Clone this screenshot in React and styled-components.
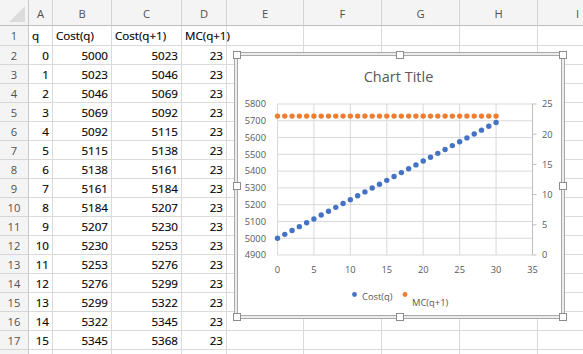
import React from 'react';
import styled, { createGlobalStyle } from 'styled-components';

const GlobalStyle = createGlobalStyle`
  html, body {
    margin: 0;
    padding: 0;
    background: #fff;
    overflow: hidden;
  }
  body {
    font-family: "Open Sans", "Liberation Sans", sans-serif;
  }
`;

const COLS = ['A', 'B', 'C', 'D', 'E', 'F', 'G', 'H', 'I'];
const WIDTHS = [29, 24, 59, 70, 45, 77, 78, 78, 78, 80];

const rows = Array.from({ length: 16 }, (_, q) => ({
  q,
  cost: 5000 + 23 * q,
  next: 5023 + 23 * q,
  mc: 23,
}));

const Page = styled.div`
  position: relative;
  width: 583px;
  height: 354px;
  overflow: hidden;
`;

const Sheet = styled.div`
  display: grid;
  grid-template-columns: ${WIDTHS.map((w) => `${w}px`).join(' ')};
  grid-template-rows: 26px 20px repeat(17, 19px);
  font-size: 11.6px;
  color: #000;
  -webkit-text-stroke: 0.15px #000;
`;

const Corner = styled.div`
  position: relative;
  background: #f4f4f4;
  border-right: 1px solid #c9c9c9;
  border-bottom: 1px solid #bdbdbd;
  box-sizing: border-box;
  &::after {
    content: '';
    position: absolute;
    right: 3px;
    bottom: 3px;
    width: 0;
    height: 0;
    border-left: 16px solid transparent;
    border-bottom: 16px solid #dcdcdc;
  }
`;

const ColHead = styled.div`
  background: #f4f4f4;
  border-right: 1px solid #d4d4d4;
  border-bottom: 1px solid #bdbdbd;
  box-sizing: border-box;
  display: flex;
  align-items: center;
  justify-content: center;
  color: #505050;
  -webkit-text-stroke: 0;
  font-size: 11.2px;
  padding-top: 1px;
`;

const RowHead = styled.div`
  background: #f4f4f4;
  border-right: 1px solid #c9c9c9;
  border-bottom: 1px solid #d6d6d6;
  box-sizing: border-box;
  display: flex;
  align-items: center;
  justify-content: center;
  color: #505050;
  -webkit-text-stroke: 0;
  font-size: 11.2px;
`;

const Cell = styled.div`
  border-right: 1px solid #dadada;
  border-bottom: 1px solid #dadada;
  box-sizing: border-box;
  display: flex;
  align-items: center;
  justify-content: ${(p) => (p.$align === 'right' ? 'flex-end' : 'flex-start')};
  padding: 0 3px;
  white-space: nowrap;
  overflow: visible;
  min-width: 0;
`;

const Frame = styled.div`
  position: absolute;
  left: 234px;
  top: 52px;
  width: 331px;
  height: 267px;
  box-sizing: border-box;
  border: 1px solid #a9a9a9;
  padding: 2px;
  background: #ececec;
`;

const ChartBox = styled.div`
  width: 100%;
  height: 100%;
  box-sizing: border-box;
  border: 1px solid #a9a9a9;
  background: #fff;
  display: flex;
`;

const Handle = styled.div`
  position: absolute;
  width: 8px;
  height: 8px;
  box-sizing: border-box;
  background: #fff;
  border: 1px solid #8d8d8d;
  left: ${(p) => p.$x};
  top: ${(p) => p.$y};
  transform: translate(-50%, -50%);
`;

const HANDLES = [
  ['1.5px', '1.5px'],
  ['50%', '1.5px'],
  ['calc(100% - 1.5px)', '1.5px'],
  ['1.5px', '50%'],
  ['calc(100% - 1.5px)', '50%'],
  ['1.5px', 'calc(100% - 1.5px)'],
  ['50%', 'calc(100% - 1.5px)'],
  ['calc(100% - 1.5px)', 'calc(100% - 1.5px)'],
];

// plot geometry in page coordinates
const PX0 = 277.5;
const PX1 = 532.5;
const PY0 = 104;
const PY1 = 255;
const xAt = (v) => PX0 + (v / 35) * (PX1 - PX0);
const yLeft = (v) => PY1 - ((v - 4900) / 900) * (PY1 - PY0);
const yRight = (v) => PY1 - (v / 25) * (PY1 - PY0);

const BLUE = '#4472c4';
const ORANGE = '#ed7d31';
const AXIS_TEXT = '#595959';

const Chart = () => {
  const points = Array.from({ length: 31 }, (_, q) => q);
  const leftTicks = Array.from({ length: 10 }, (_, i) => 4900 + i * 100);
  const xTicks = Array.from({ length: 8 }, (_, i) => i * 5);
  const rightTicks = Array.from({ length: 6 }, (_, i) => i * 5);

  return (
    <svg width="323" height="259" viewBox="238 56 323 259" fontFamily='"Open Sans", "Liberation Sans", sans-serif'>
      <text x="398.5" y="82" textAnchor="middle" fontSize="14.5" fill={AXIS_TEXT}>
        Chart Title
      </text>

      {leftTicks.map((v) => (
        <line key={`h${v}`} x1={PX0} x2={PX1} y1={yLeft(v)} y2={yLeft(v)} stroke="#d9d9d9" strokeWidth="1" />
      ))}
      {xTicks.map((v) => (
        <line key={`v${v}`} x1={xAt(v)} x2={xAt(v)} y1={PY0} y2={PY1} stroke="#d9d9d9" strokeWidth="1" />
      ))}
      <line x1={PX1} x2={PX1} y1={PY0} y2={PY1} stroke="#bfbfbf" strokeWidth="1" />
      {rightTicks.map((v) => (
        <line key={`t${v}`} x1={PX1} x2={PX1 + 4} y1={yRight(v)} y2={yRight(v)} stroke="#bfbfbf" strokeWidth="1" />
      ))}

      {leftTicks.map((v) => (
        <text key={`l${v}`} x="266" y={yLeft(v) + 3.3} textAnchor="end" fontSize="9.3" fill={AXIS_TEXT}>
          {v}
        </text>
      ))}
      {rightTicks.map((v) => (
        <text key={`r${v}`} x="542" y={yRight(v) + 3.3} fontSize="9.3" fill={AXIS_TEXT}>
          {v}
        </text>
      ))}
      {xTicks.map((v) => (
        <text key={`x${v}`} x={xAt(v)} y="272.5" textAnchor="middle" fontSize="9.3" fill={AXIS_TEXT}>
          {v}
        </text>
      ))}

      {points.map((q) => (
        <circle key={`o${q}`} cx={xAt(q)} cy={yRight(23)} r="2.7" fill={ORANGE} />
      ))}
      {points.map((q) => (
        <circle key={`b${q}`} cx={xAt(q)} cy={yLeft(5000 + 23 * q)} r="2.7" fill={BLUE} />
      ))}

      <circle cx="354.5" cy="294.5" r="2.4" fill={BLUE} />
      <text x="362" y="299.5" fontSize="9.4" fill={AXIS_TEXT}>Cost(q)</text>
      <circle cx="405" cy="294.5" r="2.4" fill={ORANGE} />
      <text x="412" y="306" fontSize="9.4" fill={AXIS_TEXT}>MC(q+1)</text>
    </svg>
  );
};

const App = () => {
  const blanks = (n, key) =>
    Array.from({ length: n }, (_, i) => <Cell key={`${key}-${i}`} />);

  return (
    <Page>
      <GlobalStyle />
      <Sheet>
        <Corner />
        {COLS.map((c) => (
          <ColHead key={c}>{c}</ColHead>
        ))}

        <RowHead>1</RowHead>
        <Cell>q</Cell>
        <Cell>Cost(q)</Cell>
        <Cell>Cost(q+1)</Cell>
        <Cell>MC(q+1)</Cell>
        {blanks(5, 'r1')}

        {rows.map((r, i) => (
          <React.Fragment key={r.q}>
            <RowHead>{i + 2}</RowHead>
            <Cell $align="right">{r.q}</Cell>
            <Cell $align="right">{r.cost}</Cell>
            <Cell $align="right">{r.next}</Cell>
            <Cell $align="right">{r.mc}</Cell>
            {blanks(5, `r${i + 2}`)}
          </React.Fragment>
        ))}

        {/* row 18 is only a sliver at the bottom edge */}
        <RowHead />
        {blanks(9, 'r18')}
      </Sheet>

      <Frame>
        <ChartBox>
          <Chart />
        </ChartBox>
        {HANDLES.map(([x, y], i) => (
          <Handle key={i} $x={x} $y={y} />
        ))}
      </Frame>
    </Page>
  );
};

export default App;
